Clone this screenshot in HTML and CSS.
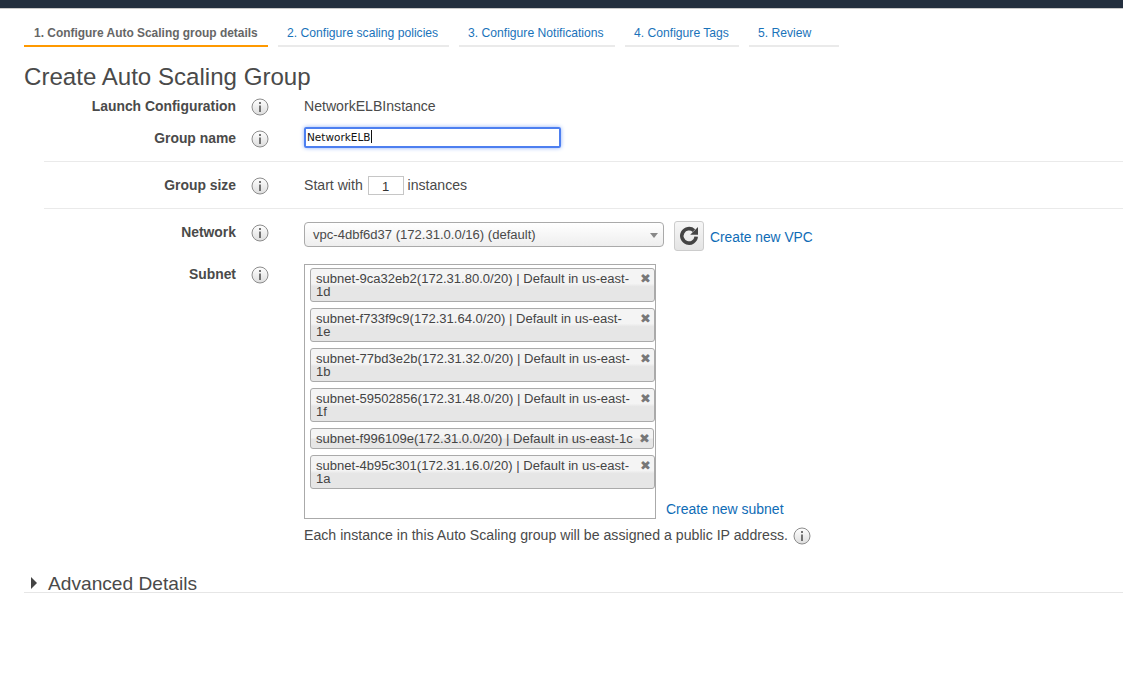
FILE: index.html
```html
<!DOCTYPE html>
<html lang="en">
<head>
    <meta charset="UTF-8">
    <title>Create Auto Scaling Group</title>
    <link rel="stylesheet" href="styles.css">
</head>
<body>
<div class="topbar"></div>
<ul class="tabs">
    <li class="tab tab-on">1. Configure Auto Scaling group details</li>
    <li class="tab tab-2">2. Configure scaling policies</li>
    <li class="tab tab-3">3. Configure Notifications</li>
    <li class="tab tab-4">4. Configure Tags</li>
    <li class="tab tab-5">5. Review</li>
</ul>
<h1 class="title">Create Auto Scaling Group</h1>

<svg class="defs" width="0" height="0">
    <defs>
        <linearGradient id="infoFill" x1="0" y1="0" x2="0" y2="1">
            <stop offset="0" stop-color="#ffffff"/>
            <stop offset="1" stop-color="#dddddd"/>
        </linearGradient>
        <symbol id="info" viewBox="0 0 18 18">
            <circle cx="9" cy="9" r="8" fill="url(#infoFill)" stroke="#8c8c8c" stroke-width="1"/>
            <rect x="8.200" y="7.500" width="1.600" height="6.500" fill="#555"/>
            <rect x="8.200" y="4" width="1.600" height="2" fill="#555"/>
        </symbol>
    </defs>
</svg>

<div class="row row-launch">
    <label class="label">Launch Configuration</label>
    <svg class="info"><use href="#info"/></svg>
    <div class="value">NetworkELBInstance</div>
</div>
<div class="row row-name">
    <label class="label">Group name</label>
    <svg class="info"><use href="#info"/></svg>
    <div class="value"><div class="name-input">NetworkELB<span class="caret"></span></div></div>
</div>
<hr class="rule rule-1">
<div class="row row-size">
    <label class="label">Group size</label>
    <svg class="info"><use href="#info"/></svg>
    <div class="value size-value">Start with <span class="size-input">1</span> instances</div>
</div>
<hr class="rule rule-2">
<div class="row row-network">
    <label class="label">Network</label>
    <svg class="info"><use href="#info"/></svg>
    <div class="value network-value">
        <div class="select">vpc-4dbf6d37 (172.31.0.0/16) (default)<span class="select-arrow"></span></div>
        <button class="refresh" type="button">
            <svg width="24" height="24" viewBox="0 0 20 20">
                <path d="M16 10.500a6 6 0 1 1-1.900-5" fill="none" stroke="#444" stroke-width="3"/>
                <path d="M17.500 2.500v6.500h-6.500z" fill="#444"/>
            </svg>
        </button>
        <a class="link vpc-link">Create new VPC</a>
    </div>
</div>
<div class="row row-subnet">
    <label class="label">Subnet</label>
    <svg class="info"><use href="#info"/></svg>
    <div class="value subnet-value">
        <div class="subnet-line">
            <div class="subnet-box">
                <div class="chip"><span class="chip-text">subnet-9ca32eb2(172.31.80.0/20) | Default in us-east-1d</span><span class="chip-x">✖</span></div>
                <div class="chip"><span class="chip-text">subnet-f733f9c9(172.31.64.0/20) | Default in us-east-1e</span><span class="chip-x">✖</span></div>
                <div class="chip"><span class="chip-text">subnet-77bd3e2b(172.31.32.0/20) | Default in us-east-1b</span><span class="chip-x">✖</span></div>
                <div class="chip"><span class="chip-text">subnet-59502856(172.31.48.0/20) | Default in us-east-1f</span><span class="chip-x">✖</span></div>
                <div class="chip chip-single"><span class="chip-text">subnet-f996109e(172.31.0.0/20) | Default in us-east-1c</span><span class="chip-x">✖</span></div>
                <div class="chip"><span class="chip-text">subnet-4b95c301(172.31.16.0/20) | Default in us-east-1a</span><span class="chip-x">✖</span></div>
            </div>
            <a class="link subnet-link">Create new subnet</a>
        </div>
        <div class="note">Each instance in this Auto Scaling group will be assigned a public IP address. <svg class="info note-info"><use href="#info"/></svg></div>
    </div>
</div>
<div class="advanced"><span class="triangle"></span>Advanced Details</div>
</body>
</html>
```

FILE: styles.css
```css
*{
    margin: 0;
    padding: 0;
    box-sizing: border-box;
}
html,body{
    height: 675px;
    overflow: hidden;
}
body{
    background: #fff;
    color: #4a4a4a;
    font-family: "Liberation Sans", Arial, sans-serif;
    font-size: 14px;
}
ul,li{
    list-style: none;
}
.defs{
    position: absolute;
}
.topbar{
    height: 9px;
    background: #232f3e;
    border-bottom: 1px solid #c9c9c9;
}
.tabs{
    display: flex;
    gap: 10px;
    margin: 14px 0 0 24px;
}
.tab{
    height: 24px;
    padding-left: 9px;
    border-bottom: 2px solid #eaeaea;
    color: #1a73ba;
    font-size: 12.150px;
    line-height: 21px;
}
.tab-on{
    width: 244px;
    padding-left: 10px;
    border-bottom-color: #f90;
    color: #666;
    font-size: 11.950px;
    font-weight: bold;
}
.tab-2{
    width: 171px;
}
.tab-3{
    width: 156px;
}
.tab-4{
    width: 114px;
}
.tab-5{
    width: 90px;
}
.title{
    margin: 16px 0 0 24px;
    font-size: 24.100px;
    font-weight: normal;
    line-height: 28px;
    color: #4a4a4a;
}
.row{
    display: flex;
    align-items: flex-start;
}
.label{
    width: 236px;
    text-align: right;
    font-weight: bold;
    font-size: 13.900px;
    line-height: 18px;
    color: #4a4a4a;
}
.info{
    width: 18px;
    height: 18px;
    margin: 1px 0 0 15px;
    flex: none;
}
.value{
    margin-left: 35px;
    font-size: 14.100px;
    line-height: 18px;
    color: #4a4a4a;
}
.row-launch{
    margin-top: 6px;
}
.row-name{
    margin-top: 13px;
}
.name-input{
    width: 257px;
    height: 21px;
    margin-top: -2px;
    padding-left: 1px;
    border: 2px solid #4d7ff0;
    border-radius: 2px;
    box-shadow: 0 0 4px #8fb0f8;
    font-family: "DejaVu Sans", sans-serif;
    font-size: 10.500px;
    line-height: 17px;
    color: #111;
}
.caret{
    display: inline-block;
    width: 1px;
    height: 13px;
    background: #111;
    vertical-align: -2px;
}
.rule{
    border: 0;
    border-top: 1px solid #eaeaea;
    margin-left: 44px;
}
.rule-1{
    margin-top: 13px;
}
.rule-2{
    margin-top: 13px;
}
.row-size{
    margin-top: 14px;
}
.size-input{
    display: inline-block;
    width: 36px;
    height: 19px;
    margin-left: 1px;
    border: 1px solid #c6c6c6;
    font-size: 13px;
    line-height: 19px;
    text-align: center;
    color: #333;
    vertical-align: -1px;
}
.row-network{
    margin-top: 14px;
}
.network-value{
    display: flex;
    align-items: flex-start;
    margin-top: -1px;
}
.select{
    position: relative;
    width: 360px;
    height: 25px;
    padding-left: 8px;
    border: 1px solid #aaa;
    border-radius: 4px;
    background: linear-gradient(#fff, #eee);
    font-size: 13.050px;
    line-height: 23px;
    color: #4a4a4a;
}
.select-arrow{
    position: absolute;
    right: 5px;
    top: 10px;
    border-left: 4px solid transparent;
    border-right: 4px solid transparent;
    border-top: 5px solid #888;
}
.refresh{
    width: 30px;
    height: 30px;
    margin: -1px 0 0 10px;
    border: 1px solid #ccc;
    border-radius: 3px;
    background: linear-gradient(#f6f6f6, #e4e4e4);
    display: flex;
    align-items: center;
    justify-content: center;
}
.link{
    color: #0f6cb6;
    font-size: 14px;
    line-height: 18px;
}
.vpc-link{
    margin: 7px 0 0 6px;
    font-size: 13.800px;
}
.row-subnet{
    margin-top: 14px;
}
.subnet-value{
    margin-top: -1px;
}
.subnet-line{
    display: flex;
    align-items: flex-end;
}
.subnet-box{
    width: 352px;
    height: 255px;
    padding: 3px 0 0 5px;
    border: 1px solid #aaa;
    display: flex;
    flex-direction: column;
    align-items: flex-start;
    gap: 6px;
}
.chip{
    display: flex;
    flex: none;
    width: 345px;
    height: 34px;
    padding: 3px 0 0 5px;
    border: 1px solid #aaa;
    border-radius: 3px;
    background: linear-gradient(#f4f4f4 45%, #e6e6e6 55%);
    font-size: 13.050px;
    line-height: 13px;
    color: #444;
}
.chip-text{
    width: 318px;
}
.chip-x{
    margin: 0 3px 0 auto;
    font-size: 13px;
    color: #777;
}
.chip-single{
    width: 344px;
    height: 21px;
    white-space: nowrap;
}
.subnet-link{
    margin: 0 0 1px 10px;
}
.note{
    margin-top: 7px;
    font-size: 14.150px;
    line-height: 18px;
}
.note-info{
    margin: 0 0 0 1px;
    vertical-align: -5px;
}
.advanced{
    position: relative;
    height: 20px;
    margin: 28px 0 0 24px;
    padding-left: 24px;
    border-bottom: 1px solid #e6e6e6;
    font-size: 19.150px;
    line-height: 22px;
    color: #4a4a4a;
}
.triangle{
    position: absolute;
    left: 7px;
    top: 4px;
    border-top: 6px solid transparent;
    border-bottom: 6px solid transparent;
    border-left: 6px solid #444;
}
```
